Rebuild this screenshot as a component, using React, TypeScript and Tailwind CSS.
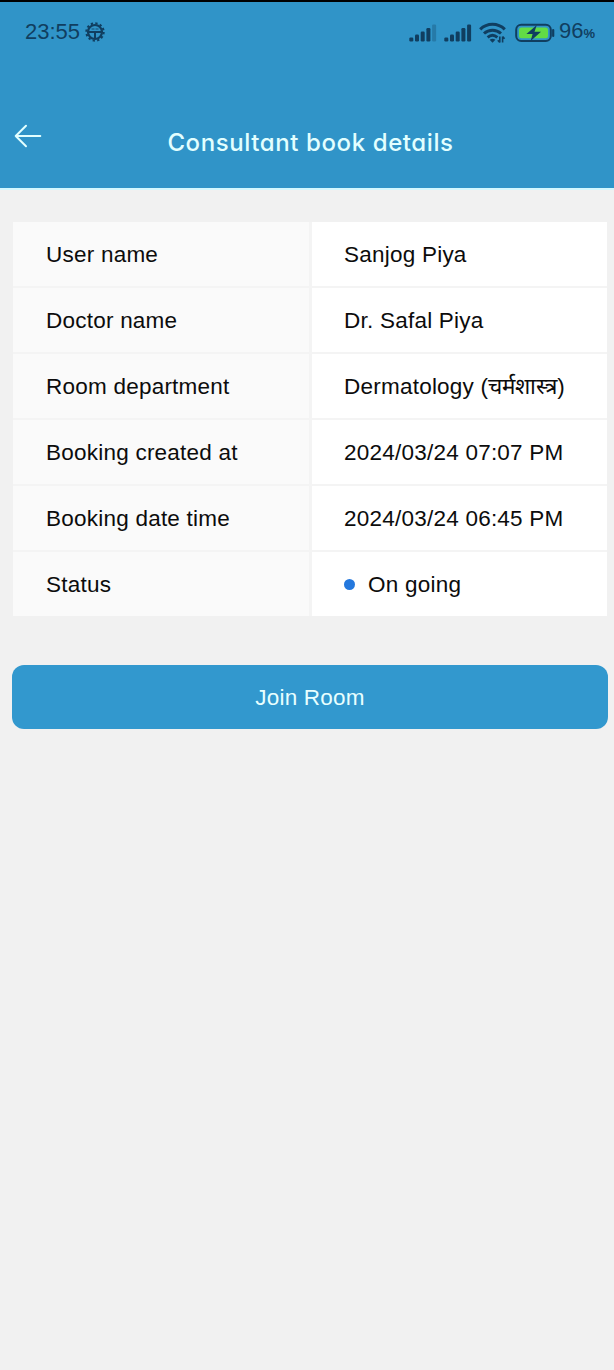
import React from 'react';

const rows = [
  { label: 'User name', value: 'Sanjog Piya' },
  { label: 'Doctor name', value: 'Dr. Safal Piya' },
  { label: 'Room department', value: <>Dermatology (<span className="tracking-normal">चर्मशास्त्र</span>)</> },
  { label: 'Booking created at', value: '2024/03/24 07:07 PM' },
  { label: 'Booking date time', value: '2024/03/24 06:45 PM' },
  { label: 'Status', value: 'On going', dot: true },
];

const GearIcon = () => (
  <svg width="20" height="20" viewBox="0 0 20 20" fill="none" stroke="currentColor">
    <circle cx="10" cy="10" r="8.7" strokeWidth="2" strokeDasharray="2.28 2.28" />
    <circle cx="10" cy="10" r="7" strokeWidth="2.2" />
    <path d="M4 10h12M10 10v6" strokeWidth="2" />
    <path d="M6.5 7h7" strokeWidth="0.8" strokeDasharray="3 1" />
  </svg>
);

const SignalIcon = ({ weak }: { weak?: boolean }) => (
  <svg width="28" height="20" viewBox="0 0 28 20" fill="currentColor">
    <rect x="0.3" y="14.5" width="4" height="4" rx="1.2" />
    <rect x="6" y="11.5" width="4" height="7" rx="1.2" />
    <rect x="11.7" y="8.5" width="4" height="10" rx="1.2" />
    <rect x="17.4" y="5" width="4" height="13.5" rx="1.2" />
    <rect x="23.1" y="1.5" width="4" height="17" rx="1.2" opacity={weak ? 0.3 : 1} />
  </svg>
);

const WifiIcon = () => (
  <svg width="28" height="22" viewBox="0 0 28 22" fill="none" stroke="currentColor">
    <path d="M1.2 7.4C8.2 0.6 18.8 0.6 25.8 7.4" strokeWidth="3.1" />
    <path d="M5 11.5C10 7 17 7 22 11.5" strokeWidth="3" />
    <path d="M8.6 15.4C11.6 12.8 15.4 12.8 18.4 15.4" strokeWidth="2.8" />
    <path d="M10.6 17.8Q13.5 15.6 16.4 17.8L13.5 20.8Z" fill="currentColor" stroke="none" />
    <path d="M20.8 14.5v6M18.8 18.2l2 2.3M23.6 20.5v-6M25.6 16.8l-2-2.3" strokeWidth="1.6" />
  </svg>
);

const BatteryIcon = () => (
  <svg width="40" height="20" viewBox="0 0 40 20">
    <rect x="1.2" y="1.7" width="34.6" height="16.3" rx="5" fill="none" stroke="#103e60" strokeWidth="2" />
    <rect x="4" y="4.5" width="29" height="10.7" rx="2.5" fill="#62dc45" />
    <path d="M21.8 2 11.4 11h6.2l-2 7L26 8.8h-6.5z" fill="#103e60" />
    <path d="M38.2 7v6" stroke="#103e60" strokeWidth="2.2" strokeLinecap="round" />
  </svg>
);

const BackIcon = () => (
  <svg width="28" height="24" viewBox="0 0 28 24" fill="none" stroke="#e2ffff" strokeWidth="2" strokeLinecap="round" strokeLinejoin="round">
    <path d="M26.3 12H1.7M12 1.8 1.7 12 12 22.2" />
  </svg>
);

const StatusBar = () => (
  <div className="flex h-[60px] items-center justify-between pr-[19px] pl-[25px] text-[#103e60]">
    <div className="flex items-center gap-[5px]">
      <span className="text-[22px] leading-6">23:55</span>
      <GearIcon />
    </div>
    <div className="flex items-center pt-px">
      <SignalIcon weak />
      <div className="ml-[7px]"><SignalIcon /></div>
      <div className="ml-[7px]"><WifiIcon /></div>
      <div className="ml-[8px]"><BatteryIcon /></div>
      <div className="ml-[4px] flex items-baseline leading-6">
        <span className="text-[22px]">96</span>
        <span className="text-[13px] font-bold">%</span>
      </div>
    </div>
  </div>
);

const Header = () => (
  <header className="flex h-[188px] flex-col border-t-2 border-black bg-[#3094c8]">
    <StatusBar />
    <div className="grid h-[126px] grid-cols-[42px_1fr_49px] pt-[62px] pl-[14px]">
      <button className="h-6"><BackIcon /></button>
      <h1 className="pt-[3px] text-center font-[Inter] text-[24px] leading-8 font-medium tracking-[0.6px] [font-feature-settings:'cv11'] whitespace-nowrap text-[#e2ffff]">
        Consultant book details
      </h1>
    </div>
  </header>
);

export default function App() {
  return (
    <div className="min-h-[1370px] bg-[#f1f1f1] font-['Liberation_Sans',Arial,sans-serif] text-[22.5px] text-[#0c0c0c]">
      <Header />
      <div className="h-0.5 bg-[#d3f8ff]" />
      <main className="pt-8 pr-[6px] pl-3 tracking-[0.23px]">
        <dl className="mr-px ml-px flex flex-col gap-0.5 bg-[#f4f4f4]">
          {rows.map((row) => (
            <div key={row.label} className="grid h-16 grid-cols-[296px_1fr] gap-[3px]">
              <dt className="flex items-center bg-[#fafafa] pt-px pl-[33px]">{row.label}</dt>
              <dd className="flex items-center bg-white pt-px pl-8 whitespace-nowrap">
                {row.dot && <span className="mr-[13px] h-[11px] w-[11px] rounded-full bg-[#2478dd]" />}
                <span>{row.value}</span>
              </dd>
            </div>
          ))}
        </dl>
        <button className="mt-[49px] h-16 w-full rounded-xl bg-[#3298ce] pt-px tracking-[0.23px] text-[#e8ffff]">Join Room</button>
      </main>
    </div>
  );
}
